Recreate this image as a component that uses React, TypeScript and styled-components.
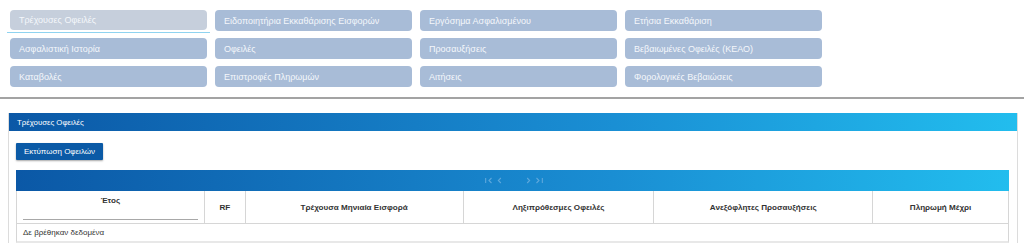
import styled, {createGlobalStyle} from "styled-components";

const GlobalStyle = createGlobalStyle`
  html, body {
    margin: 0;
    padding: 0;
    background: #ffffff;
    font-family: "Liberation Sans", Arial, sans-serif;
  }
`

type MenuItem = {
    label: string
    active?: boolean
}

const menuItems: MenuItem[] = [
    {label: "Τρέχουσες Οφειλές", active: true},
    {label: "Ειδοποιητήρια Εκκαθάρισης Εισφορών"},
    {label: "Εργόσημα Ασφαλισμένου"},
    {label: "Ετήσια Εκκαθάριση"},
    {label: "Ασφαλιστική Ιστορία"},
    {label: "Οφειλές"},
    {label: "Προσαυξήσεις"},
    {label: "Βεβαιωμένες Οφειλές (ΚΕΑΟ)"},
    {label: "Καταβολές"},
    {label: "Επιστροφές Πληρωμών"},
    {label: "Αιτήσεις"},
    {label: "Φορολογικές Βεβαιώσεις"},
]

type Column = {
    title: string
    width: number
    filter?: boolean
}

const columns: Column[] = [
    {title: "Έτος", width: 188, filter: true},
    {title: "RF", width: 41},
    {title: "Τρέχουσα Μηνιαία Εισφορά", width: 218},
    {title: "Ληξιπρόθεσμες Οφειλές", width: 191},
    {title: "Ανεξόφλητες Προσαυξήσεις", width: 219},
    {title: "Πληρωμή Μέχρι", width: 135},
]

export default function App() {
    return (
        <>
            <GlobalStyle/>
            <StyledMenu>
                {menuItems.map(item => (
                    <StyledMenuButton key={item.label} $active={item.active}>{item.label}</StyledMenuButton>
                ))}
            </StyledMenu>
            <StyledDivider/>
            <StyledPanel>
                <StyledPanelHeader>Τρέχουσες Οφειλές</StyledPanelHeader>
                <StyledPanelBody>
                    <StyledPrintButton>Εκτύπωση Οφειλών</StyledPrintButton>
                    <StyledTable>
                        <StyledPager>
                            <StyledPagerIcon viewBox="0 0 12 10">
                                <path d="M2 2v6M9 2L6 5l3 3"/>
                            </StyledPagerIcon>
                            <StyledPagerIcon viewBox="0 0 12 10">
                                <path d="M7 2L4 5l3 3"/>
                            </StyledPagerIcon>
                            <StyledPagerGap/>
                            <StyledPagerIcon viewBox="0 0 12 10">
                                <path d="M5 2l3 3-3 3"/>
                            </StyledPagerIcon>
                            <StyledPagerIcon viewBox="0 0 12 10">
                                <path d="M3 2l3 3-3 3M10 2v6"/>
                            </StyledPagerIcon>
                        </StyledPager>
                        <StyledHeaderRow>
                            {columns.map(col => (
                                <StyledHeaderCell key={col.title} $width={col.width} $filter={col.filter}>
                                    <span>{col.title}</span>
                                    {col.filter && <StyledFilterLine/>}
                                </StyledHeaderCell>
                            ))}
                        </StyledHeaderRow>
                        <StyledEmptyRow>Δε βρέθηκαν δεδομένα</StyledEmptyRow>
                    </StyledTable>
                </StyledPanelBody>
            </StyledPanel>
        </>
    )
}

const StyledMenu = styled.div`
  display: grid;
  grid-template-columns: repeat(4, 197px);
  grid-auto-rows: 21px;
  column-gap: 8px;
  row-gap: 7px;
  padding: 10px 0 0 10px;
  height: 88px;
  box-sizing: border-box;
`

const StyledMenuButton = styled.div<{ $active?: boolean }>`
  position: relative;
  display: flex;
  align-items: center;
  padding-left: 9px;
  border-radius: 4px;
  background: ${props => props.$active ? "#c6cfdc" : "#a8bcd7"};
  color: #f4f7fb;
  font-size: 9px;
  margin-bottom: ${props => props.$active ? "1px" : "0"};

  &::after {
    content: "";
    display: ${props => props.$active ? "block" : "none"};
    position: absolute;
    left: -3px;
    right: -3px;
    bottom: -3px;
    height: 1px;
    background: #8fd3f0;
  }
`

const StyledDivider = styled.div`
  margin-top: 9px;
  height: 2px;
  background: #a3a3a3;
`

const StyledPanel = styled.div`
  margin: 14px 6px 0 8px;
  border: 1px solid #dcdcdc;
  border-top: none;
  height: 130px;
`

const StyledPanelHeader = styled.div`
  height: 18px;
  display: flex;
  align-items: center;
  padding-left: 8px;
  background: linear-gradient(to right, #0b58a6, #1a8fd4 60%, #22bdee);
  color: #ffffff;
  font-size: 7.8px;
`

const StyledPanelBody = styled.div`
  padding: 9px 7px 0 7px;
`

const StyledPrintButton = styled.div`
  display: inline-flex;
  align-items: center;
  height: 17px;
  padding: 0 8px 0 8px;
  background: #0b5aa6;
  color: #ffffff;
  font-size: 8px;
  box-shadow: 0 1px 2px rgba(0, 0, 0, 0.35);
  border-radius: 1px;
`

const StyledTable = styled.div`
  margin-top: 10px;
  width: 993px;
`

const StyledPager = styled.div`
  height: 21px;
  display: flex;
  align-items: center;
  justify-content: center;
  gap: 1px;
  padding-left: 2px;
  background: linear-gradient(to right, #0b58a6, #1a8ed3 60%, #22bdee);
`

const StyledPagerIcon = styled.svg`
  width: 10px;
  height: 9px;
  fill: none;
  stroke: #5ea8dc;
  stroke-width: 1.3;
`

const StyledPagerGap = styled.div`
  width: 16px;
`

const StyledHeaderRow = styled.div`
  display: flex;
  height: 33px;
  border-left: 1px solid #d6d6d6;
  border-right: 1px solid #d6d6d6;
  border-bottom: 1px solid #d6d6d6;
  box-sizing: border-box;
`

const StyledHeaderCell = styled.div<{ $width: number, $filter?: boolean }>`
  width: ${props => props.$width}px;
  display: flex;
  flex-direction: column;
  align-items: center;
  justify-content: ${props => props.$filter ? "space-between" : "center"};
  padding: ${props => props.$filter ? "5px 6px 3px 6px" : "0"};
  box-sizing: border-box;
  border-right: 1px solid #d6d6d6;
  font-size: 8.1px;
  font-weight: bold;
  color: #333333;

  &:last-child {
    border-right: none;
  }
`

const StyledFilterLine = styled.div`
  width: 100%;
  height: 1px;
  background: #a8a8a8;
`

const StyledEmptyRow = styled.div`
  height: 17px;
  display: flex;
  align-items: center;
  padding-left: 6px;
  border-left: 1px solid #d6d6d6;
  border-right: 1px solid #d6d6d6;
  border-bottom: 2px solid #e8e8e8;
  font-size: 8px;
  color: #333333;
`
